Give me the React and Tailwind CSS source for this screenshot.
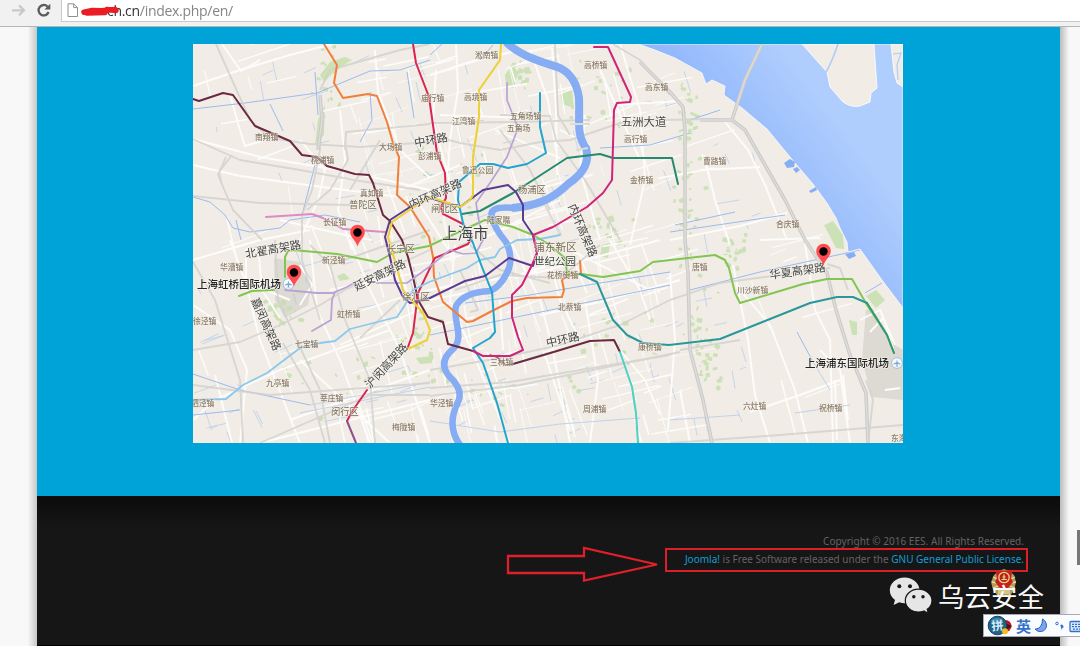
import React from "react";

function rng(seed) {
  let s = seed;
  return () => {
    s = (s * 1664525 + 1013904223) % 4294967296;
    return s / 4294967296;
  };
}

const SEA =
  "638,44 655,50 675,58 702,73 706,84 712,80 725,86 724,95 742,108 767,129 795,163 813,184 827,203 836,218 840,228 847,242 848,252 860,249 882,280 903,308 903,44";

function seaEdge(y) {
  const e = [[44, 630], [58, 670], [92, 725], [133, 767], [167, 798], [203, 827], [242, 847], [280, 882], [308, 903], [999, 903]];
  for (let i = 1; i < e.length; i++) {
    if (y < e[i][0]) {
      const t = (y - e[i - 1][0]) / (e[i][0] - e[i - 1][0]);
      return e[i - 1][1] + t * (e[i][1] - e[i - 1][1]);
    }
  }
  return 903;
}

const r = rng(77);
const streets = Array.from({ length: 260 }, () => {
  const cx = r() < 0.8 ? 350 + r() * 310 : 193 + r() * 710;
  const cy = 44 + r() * 399;
  const steep = r() < 0.5;
  const len = 14 + r() * 45;
  const a = (steep ? 1.3 : -0.28) + (r() - 0.5) * 0.25;
  return {
    d: `M${cx.toFixed(1)} ${cy.toFixed(1)}l${(Math.cos(a) * len).toFixed(1)} ${(Math.sin(a) * len).toFixed(1)}`,
    w: 0.6 + r() * 1.1,
  };
});
const canals = Array.from({ length: 130 }, () => {
  const cx = 193 + r() * 560;
  const cy = 60 + r() * 375;
  const a = (r() < 0.5 ? 1.25 : -0.3) + (r() - 0.5) * 0.3;
  const len = 5 + r() * 20;
  return `M${cx.toFixed(1)} ${cy.toFixed(1)}l${(Math.cos(a) * len).toFixed(1)} ${(Math.sin(a) * len).toFixed(1)}`;
});
const clusters = [
  [325, 75, 18, 45], [520, 75, 18, 22], [687, 120, 14, 40], [686, 160, 18, 70], [690, 235, 16, 60], [698, 330, 22, 50], [706, 365, 16, 30],
  [500, 380, 90, 30], [620, 335, 50, 40], [280, 310, 20, 16], [420, 330, 30, 45], [610, 225, 25, 25], [735, 250, 15, 25],
  [450, 190, 60, 60], [350, 370, 90, 50], [600, 90, 40, 40],
];
const parks = clusters.flatMap(([x, y, w, h]) =>
  Array.from({ length: 20 }, () => ({
    x: x + (r() + r() - 1) * w,
    y: y + (r() + r() - 1) * h,
    w: 1.5 + r() * 4.5,
    h: 1.5 + r() * 3.5,
    a: r() * 60 - 30,
  }))
).filter((p) => p.x < seaEdge(p.y) - 8 && p.y < 440);

const whiteRoads = [
  "193,86 240,70 290,55 332,44", "222,44 241,71 260,60", "193,139 260,157 350,172 430,190", "193,165 240,176 330,188 400,197",
  "230,95 240,130 245,146 265,140", "300,140 325,170 318,200 300,240", "340,110 345,160 338,210 352,250", "375,50 378,92 400,150 430,178",
  "456,44 458,90 450,140 448,170", "430,75 470,62 520,50", "440,115 500,117 540,117", "436,70 433,120 452,190", "552,48 556,110 557,175",
  "530,50 548,100 556,150", "620,44 640,110 645,180 630,245", "615,105 680,101", "600,70 640,160", "585,115 580,170 600,240", "560,130 590,145",
  "704,155 715,200 730,245", "725,122 748,150 765,185 787,240", "670,240 740,226 787,213", "760,240 820,238", "700,170 760,167",
  "193,260 260,240 310,230", "230,240 245,280 260,340 300,443", "193,420 215,400 280,370 390,330", "193,305 230,330 247,370 240,443",
  "215,375 232,443", "310,240 317,310 340,360 370,443", "350,240 370,290 400,350 430,443", "300,360 390,443", "260,443 370,415 430,400",
  "290,420 430,370", "330,290 430,270", "340,345 430,305", "455,245 450,300 480,370 510,443", "510,240 540,300 553,350 570,443",
  "585,300 598,380 590,443", "620,350 645,380 660,415", "545,355 560,400 570,430", "430,290 540,272 660,240", "430,300 480,290",
  "540,315 600,302 680,280", "610,240 640,290 650,320", "733,265 748,340 755,395 770,443", "740,290 770,325 795,390 808,443",
  "805,243 815,310 830,340 833,443", "750,412 800,395 840,380", "820,350 840,370 850,443", "670,273 675,340 668,430", "860,320 880,310 895,345",
  "870,332 883,318 893,348", "885,390 900,388", "835,380 837,440", "843,375 848,420", "680,390 690,443", "495,130 560,158",
  "480,240 560,200", "545,240 560,300 580,340", "500,300 503,350", "570,250 650,290", "420,205 455,260", "400,190 460,165",
  "245,250 275,248", "246,258 246,282 290,300", "300,265 312,285 300,305", "258,245 262,290 280,318", "280,220 345,235 372,240",
];
const greyRoads = [
  "216,44 232,80 250,120 270,138 310,144 360,147 430,142", "193,139 240,160 300,170 360,181 420,190", "193,196 260,203 350,205",
  "345,142 348,160 330,190 307,210", "322,110 320,150 312,190 302,215", "380,140 350,190", "226,157 218,175 233,210 262,240",
  "232,155 219,172 222,185", "320,90 330,70 400,50 430,44", "345,150 346,132 400,127 430,124",
  "430,135 460,143 500,150 540,142 570,140 620,123 660,120 715,119 732,120", "500,115 550,116 556,140 585,180 620,240",
  "555,44 558,115 570,135", "500,130 530,170 550,210", "430,123 520,122 590,120",
  "193,350 240,342 280,325 320,305 345,290 390,268 430,250", "193,262 215,300 240,380 243,443", "275,240 278,300 320,390 330,443",
  "283,343 310,390 325,443", "330,265 345,320 370,380 375,443", "302,215 302,260 320,320", "260,443 370,395 430,395",
  "430,370 500,358 560,345 620,325 670,300", "430,388 510,382 580,370 670,355", "430,396 520,385 680,352",
  "455,290 500,275 560,278 600,245", "670,300 720,283 780,275 830,268", "193,385 270,395 430,383", "680,350 740,340", "310,245 330,265 430,230",
  "670,443 780,435 903,425", "613,44 640,60 670,95", "360,338 400,300", "460,270 478,310 470,312", "470,245 500,270 550,283",
  "827,264 840,268 848,290", "866,380 873,400 868,443",
];
const bigRoads = [
  "762,44 745,80 732,120", "640,62 670,92 683,107 685,130 685,240 688,273 690,350 703,400 712,443",
  "700,120 732,120 745,130 765,165 785,200 805,240 827,273 836,310 850,355 866,393 868,443",
  "320,95 322,120 318,150",
];
const blues = [
  "193,109 245,103 317,93 370,71 400,70 430,60", "193,197 210,202 225,215 233,228 250,232 280,228 290,220 325,215 360,222",
  "315,72 318,115", "370,92 372,120 360,142", "407,72 414,118", "270,104 283,131", "302,215 315,165", "193,415 240,410",
  "193,374 240,390 310,405", "465,303 530,295 600,283 670,272", "430,335 560,308 670,285",
  "600,148 650,145 690,133", "690,120 720,110", "675,225 735,212", "670,232 785,215", "690,290 760,272 860,250",
  "797,332 812,360", "865,293 882,283", "493,45 480,60", "430,55 442,44", "236,220 241,240",
];
const faintBlues = ["300,413 430,387", "430,421 500,432 560,424 640,418", "670,420 740,415", "795,413 850,405", "812,360 830,390", "310,405 430,382"];

const L = [
  ["#6b2841", "193,99 199,101 223,93 233,95 255,126 290,141 302,155 317,157 327,166 355,174 369,175 373,183 383,215 390,221 402,240 408,257 413,277 418,300 428,317 443,322 448,344 473,351", 2],
  ["#8a4a58", "490,355 497,357 505,365 513,364", 1.4],
  ["#6b2841", "513,364 547,354 590,341 614,340 620,352", 2],
  ["#4fd0c4", "620,352 632,387 636,413 638,443", 2],
  ["#f07f3c", "324,44 337,65 334,83 343,98 368,94 377,96 387,122 393,143 399,157 397,195 410,207 429,237 433,257 434,277 443,302 467,322 473,321 490,312 512,301 527,298 562,297 564,290 562,280 567,276 581,274 580,261", 2],
  ["#d92550", "413,44 416,63 429,97 437,153 445,173 446,198 441,207 443,214 463,224 472,237 468,244 435,258 430,268 418,293 413,333 408,347", 2],
  ["#d92550", "367,390 353,410 347,421", 2],
  ["#8e4f8f", "347,421 356,443", 2],
  ["#8bc9ec", "193,400 226,399 243,385 267,373 300,348 320,343 335,341 350,329 397,317 405,305 413,290 429,282 467,268 480,260 495,257 500,249 517,240 540,239 560,235", 1.8],
  ["#82c552", "239,296 252,291 274,290", 2],
  ["#82c552", "285,277 285,257 288,251 293,250 337,254 377,262 393,253 429,246 463,230 485,220 513,227 533,235 547,243 565,258 567,273 581,274 603,277 640,271 653,262 715,255 725,260 729,268 735,293 740,303 803,284 827,279 852,279 867,305 887,335 894,353", 2],
  ["#b9a3d4", "507,83 507,100 518,128 507,157 490,183 476,203 480,227 483,240 476,253 463,254 450,250 429,267 407,283 377,283", 1.7],
  ["#b9a3d4", "285,290 317,293 333,293 347,287 360,280", 1.8],
  ["#b9a3d4", "335,292 332,300 331,320 312,331", 1.8],
  ["#db8cc4", "266,217 312,214 323,218 343,229 385,232", 1.9],
  ["#2a979c", "580,274 597,282 613,320 627,335 643,343 669,345 720,339 810,303 837,297 853,297 867,303", 2],
  ["#2f9a72", "867,303 887,335 894,353", 2],
  ["#268a70", "462,214 480,211 513,193 530,182 567,158 600,154 613,158 672,158 678,184", 2],
  ["#22a4cf", "540,93 540,127 546,153 527,164 508,168 493,164 480,164 459,182 458,200 463,223 473,243 482,267 492,292 495,332 490,338 473,348 483,363 497,403 508,443", 2],
  ["#5b3b90", "410,207 390,220 385,237 390,257 395,280 403,297 410,303 430,298 465,281 485,276 509,258 533,266 537,253 533,235 523,220 523,205 516,192 508,185 483,190 460,207 430,198 410,207", 2],
  ["#edd03a", "501,44 500,60 479,90 479,117 473,157 473,195 470,200 460,207 445,202 430,197 411,209 392,222 388,237 391,247 403,290 423,313 430,330 427,340 408,349", 2.1],
  ["#cf2479", "594,47 608,47 631,97 630,102 617,103 614,110 612,180 603,193 587,207 553,227 533,235 537,253 532,265 522,285 512,295 512,317 518,337 523,350 510,356 483,356 473,351", 2],
];

const towns = [
  ["淞南镇", 475, 58], ["高桥镇", 584, 68], ["高东镇", 645, 90], ["高境镇", 464, 100], ["庙行镇", 421, 101], ["江湾镇", 452, 124],
  ["五角场镇", 510, 119], ["五角场", 507, 131], ["高行镇", 624, 142], ["南翔镇", 255, 140], ["大场镇", 379, 150], ["彭浦镇", 418, 159],
  ["桃浦镇", 311, 163], ["鲁迅公园", 462, 173], ["曹路镇", 703, 164], ["金桥镇", 630, 183], ["真如镇", 360, 196], ["长征镇", 323, 225],
  ["陆家嘴", 487, 223], ["合庆镇", 776, 227], ["华漕镇", 220, 270], ["新泾镇", 322, 263], ["唐镇", 692, 270], ["川沙新镇", 737, 293],
  ["花桥街镇", 547, 278], ["北蔡镇", 558, 310], ["徐泾镇", 193, 324], ["虹桥镇", 337, 317], ["七宝镇", 295, 347], ["三林镇", 490, 365],
  ["康桥镇", 638, 350], ["九亭镇", 266, 386], ["莘庄镇", 320, 401], ["泗泾镇", 191, 406], ["华泾镇", 430, 406], ["周浦镇", 583, 412],
  ["六灶镇", 743, 409], ["祝桥镇", 819, 411], ["梅陇镇", 392, 430], ["东海", 891, 441],
];
const districts = [["普陀区", 349, 208], ["闸北区", 431, 212], ["杨浦区", 518, 193], ["长宁区", 387, 252], ["徐汇区", 402, 300], ["闵行区", 331, 415]];
const roadNames = [
  ["中环路", 415, 147, -10], ["内环高架路", 411, 209, -24], ["内环高架路", 568, 206, 67], ["北翟高架路", 246, 258, -10],
  ["延安高架路", 356, 291, -26], ["嘉闵高架路", 251, 300, 66], ["沪闵高架路", 370, 389, -47], ["中环路", 547, 347, -12],
  ["华夏高架路", 770, 279, -8],
];

function Pin({ x, y }) {
  return (
    <g transform={`translate(${x} ${y})`}>
      <path d="M0 0C-1.5-6-7.3-9-7.3-14.5a7.3 7.3 0 0 1 14.6 0C7.3-9 1.5-6 0 0Z" fill="#ff4a50" />
      <circle cx="0" cy="-14" r="4.2" fill="#000" />
    </g>
  );
}

function Airport({ x, y }) {
  return (
    <g transform={`translate(${x} ${y})`}>
      <circle r="5.4" fill="#f5f9fd" stroke="#a9bdd4" />
      <path d="M0-3.5L.7-.7 3.6.8v.8L.7 1l-.2 1.5 1 .9h-3l1-.9L-.7 1l-2.900.6V.8L-.7-.7Z" fill="#7fa5d4" />
    </g>
  );
}

function CityMap() {
  return (
    <svg viewBox="193 44 710 399" className="block h-[399px] w-[710px]" style={{ fontFamily: '"Noto Sans CJK SC", sans-serif' }}>
      <defs>
        <linearGradient id="sea" gradientUnits="userSpaceOnUse" x1="740" y1="165" x2="825" y2="100">
          <stop offset="0" stopColor="#90b6fc" />
          <stop offset="1" stopColor="#b0cefd" />
        </linearGradient>
      </defs>
      <rect x="193" y="44" width="710" height="399" fill="#f1ede6" />
      <g fill="#d9d5cf" opacity=".85">
        <polygon points="866,310 872,308 895,345 903,350 903,400 872,397 862,360" />
        <polygon points="274,258 300,262 312,280 308,305 285,318 275,300" />
      </g>
      <g fill="#c3deab" opacity=".8">
        {parks.map((p, i) => (
          <rect key={i} x={p.x} y={p.y} width={p.w} height={p.h} rx="1" transform={`rotate(${p.a} ${p.x} ${p.y})`} />
        ))}
        <polygon points="320,75 330,62 345,57 352,60 336,70 324,82" />
        <polygon points="505,75 512,64 518,72 514,88 506,86" />
        <polygon points="560,92 572,90 574,108 562,104" />
        <polygon points="824,225 833,221 843,235 844,249 836,248" />
        <polygon points="866,296 876,290 885,300 876,308" />
        <polygon points="602,245 610,243 608,258 600,256" />
        <polygon points="318,120 325,105 324,135 315,145" />
        <polygon points="849,320 857,322 857,335 852,335" />
        <polygon points="271,306 275,306 282,322 276,320" />
        <polygon points="416,358 433,356 432,363 420,364" />
        <polygon points="337,276 344,273 350,279 340,281" />
      </g>
      <g stroke="#a4c0ee" strokeWidth=".8" opacity=".7" fill="none">
        {canals.map((d, i) => <path key={i} d={d} />)}
      </g>
      <g fill="none" stroke="#fdfcfa">
        {streets.map((s, i) => <path key={i} d={s.d} strokeWidth={s.w} />)}
        {whiteRoads.map((p, i) => <polyline key={i} points={p} strokeWidth="1.9" />)}
      </g>
      <g fill="none" stroke="#9bbaee" strokeWidth="1" strokeLinejoin="round">
        {blues.map((p, i) => <polyline key={i} points={p} />)}
      </g>
      <g fill="none" stroke="#bccdec" strokeWidth=".9">
        {faintBlues.map((p, i) => <polyline key={i} points={p} />)}
      </g>
      <polygon points={SEA} fill="url(#sea)" stroke="#fbfaf8" strokeWidth=".8" />
      <g fill="#f1ede6" stroke="#fff" strokeWidth=".8">
        <path d="M802 44L827 72L830 87L843 102Q852 108 860 106L870 102L871 93L877 88L874 44Z" />
        <path d="M891 44L894 72L897 83L903 87V44Z" />
      </g>
      <path d="M838 44Q832 62 826 72" fill="none" stroke="#b1cbf8" strokeWidth="1.6" />
      <path d="M893 54L901 53L897 65L898 80" fill="none" stroke="#b1cbf8" strokeWidth="1.2" />
      <g fill="#86aef4">
        <path d="M784 163l6-4 5 3-1 5-7 1zM793 169l4-2 3 3-4 3zM809 191l7-4 1 3-6 3zM845 254l9-2 2 4-7 3z" />
      </g>
      <g fill="none" stroke="#d2d0cd" strokeWidth="1.9" opacity=".8" strokeLinejoin="round">
        {greyRoads.map((p, i) => <polyline key={i} points={p} />)}
      </g>
      <g fill="none" strokeLinejoin="round">
        {bigRoads.map((p, i) => <polyline key={i} points={p} stroke="#cccbc9" strokeWidth="3.6" />)}
        {bigRoads.map((p, i) => <polyline key={"c" + i} points={p} stroke="#dedddb" strokeWidth="1.4" />)}
      </g>
      <path
        d="M506 42C520 56 540 61 560 68Q576 76 579 98C580 120 576 135 586 148Q592 168 568 184C552 200 535 206 512 208"
        fill="none" stroke="#86adf3" strokeWidth="8" strokeLinejoin="round"
      />
      <path
        d="M516 208Q488 205 492 217Q494 228 506 242Q513 256 509 268Q502 286 490 291Q464 292 456 306C452 320 466 338 452 350Q438 362 449 376Q464 390 458 402Q446 426 460 445"
        fill="none" stroke="#86adf3" strokeWidth="6.500" strokeLinejoin="round"
      />
      <g fill="none" stroke="#dcdbd8" strokeWidth="2">
        <path d="M570 124L590 124M545 205L560 235M576 150L588 148" />
      </g>
      <g fill="none" strokeLinejoin="round" strokeLinecap="round">
        {L.map(([c, p, w], i) => <polyline key={i} points={p} stroke={c} strokeWidth={w} />)}
      </g>
      <g fontSize="7.8" fontWeight="500" fill="#8a7c69" stroke="#f5f1ea" strokeWidth="1.2" strokeOpacity=".55" paintOrder="stroke">
        {towns.map(([t, x, y]) => <text key={t} x={x} y={y}>{t}</text>)}
      </g>
      <g fontSize="9.3" fill="#786a57" stroke="#f5f1ea" strokeWidth="1.3" strokeOpacity=".6" paintOrder="stroke">
        {districts.map(([t, x, y]) => <text key={t} x={x} y={y}>{t}</text>)}
        <text x="534" y="251" fontSize="10.7">浦东新区</text>
      </g>
      <g fontSize="11.3" fill="#454545" stroke="#f7f4ee" strokeWidth="1.4" strokeOpacity=".75" paintOrder="stroke">
        {roadNames.map(([t, x, y, a], i) => <text key={i} transform={`translate(${x} ${y}) rotate(${a})`}>{t}</text>)}
        <text x="621" y="126">五洲大道</text>
        <text x="534" y="265" fontSize="10.5" fill="#35413a">世纪公园</text>
        <text x="442" y="239" fontSize="15.5" fill="#444">上海市</text>
        <text x="197" y="288" fontSize="10.500" fontWeight="500" fill="#222">上海虹桥国际机场</text>
        <text x="805" y="367" fontSize="10.500" fontWeight="500" fill="#222">上海浦东国际机场</text>
      </g>
      <Airport x={288.5} y={284} />
      <Airport x={897} y={363} />
      <Pin x={357.5} y={246.5} />
      <Pin x={294} y={286.5} />
      <Pin x={823.5} y={265.5} />
    </svg>
  );
}

function BrowserBar() {
  return (
    <div className="flex h-[27px] shrink-0 border-b border-[#b5b5b5] bg-[#f1f1f1]">
      <svg className="h-[26px] w-[61px]" viewBox="0 0 61 26" fill="none">
        <path d="M12 10.300H24M19 5.300L24 10.300L19 15.300" stroke="#c9c9c9" strokeWidth="2.200" />
        <path d="M47.600 6.700A5.200 5.200 0 1 0 48.600 12" stroke="#5b5b5b" strokeWidth="2.300" />
        <path d="M50.300 3.700V9.500H44.400Z" fill="#5b5b5b" />
      </svg>
      <div className="relative flex h-[22px] flex-1 border-b border-l border-[#c9c9c9] bg-white">
        <svg className="ml-[5px] mt-[3px] h-[16px] w-[12px]" viewBox="0 0 12 16" fill="#fff" stroke="#909090" strokeWidth="1">
          <path d="M1 .8H6.700L10.500 4.600V13.500H1ZM6.700 .8V4.600H10.500" />
        </svg>
        <div className="ml-[28px] mt-[1px] whitespace-nowrap font-['Open_Sans',sans-serif] text-[14px] leading-[19px] tracking-[-0.290px] text-[#858585]">
          <span className="text-[#333]">ch.cn</span>/index.php/en/
        </div>
        <svg className="absolute left-[18px] top-[4px] h-[14px] w-[44px]" viewBox="0 0 44 14">
          <path d="M4 8.200L12 6.500L22 6.700L35 5.400M7 9L25 8.400M27 5.500L36 6.500" fill="none" stroke="#ec1c24" strokeWidth="5.500" strokeLinecap="round" />
        </svg>
      </div>
    </div>
  );
}

function Watermark() {
  return (
    <div className="absolute left-[889px] top-[568px] flex h-[50px] w-[160px]">
      <svg className="absolute left-[101px] top-0 h-[30px] w-[28px]" viewBox="0 0 28 30">
        <path d="M14 1L19 3L24 7L26 14L24 22L20 28H8L3 22L1 14L4 7L9 3Z" fill="#b39c55" />
        <path d="M3 9l4 2M2 14l5 1M3 20l5-2M25 9l-4 2M26 14l-5 1M25 20l-5-2M8 27l2-5M20 27l-2-5" stroke="#e9dda8" strokeWidth="1.300" />
        <path d="M6 4L11 2.500H18L22 4L21 10L23 14L18 20H10L5 14L7 10Z" fill="#c81f1c" />
        <circle cx="14" cy="9.500" r="5.200" fill="#b9231a" stroke="#edd38b" strokeWidth="1.300" />
        <path d="M11.500 11.500H17M12.500 9H15.500M14 6.500V11" stroke="#f0d88d" strokeWidth="1.200" />
        <path d="M8 22H20V26H8Z" fill="#d4c488" />
      </svg>
      <svg className="mt-[9px] h-[38px] w-[44px]" viewBox="0 0 44 38">
        <path d="M15.500.500C7.200.500.800 6.300.800 13.200C.800 17.200 2.800 20.600 6 23L4.600 28L10.200 25.200Q15 26.900 20 25.700C26.500 24.200 30.500 19.200 30.500 13.200C30.500 6.300 23.800.500 15.500.500Z" fill="#e6e6e6" />
        <path d="M29.500 12.200C22.300 12.200 16.300 17.100 16.300 23.500S22.300 35 29.500 35Q32.200 35 34.900 34L39.400 36.500L38.200 32.300C41.300 30.200 43 27 43 23.500C43 17.100 36.700 12.200 29.500 12.200Z" fill="#e6e6e6" stroke="#161616" strokeWidth="1.200" />
        <g fill="#161616"><circle cx="10.300" cy="9.300" r="2" /><circle cx="21" cy="9.300" r="2" /><circle cx="24.800" cy="19.700" r="1.700" /><circle cx="34" cy="19.700" r="1.700" /></g>
      </svg>
      <span className="relative ml-[5px] mt-[8px] whitespace-nowrap font-['Noto_Sans_CJK_SC',sans-serif] text-[26.500px] leading-[40px] text-[#fafafa]">乌云安全</span>
    </div>
  );
}

function ImeBar() {
  return (
    <div className="absolute left-[983px] top-[614px] flex h-[23px] w-[97px] items-center overflow-hidden border border-r-0 border-[#a9a9b2] bg-[#fbfcff]">
      <svg className="ml-[3px] h-[21px] w-[25px] shrink-0" viewBox="0 0 25 21">
        <circle cx="18.500" cy="11" r="6" fill="#c61524" />
        <path d="M18 8L25 11L18 16Z" fill="#49151a" />
        <circle cx="10.500" cy="10.500" r="9.300" fill="#246389" stroke="#174261" />
        <ellipse cx="10" cy="6" rx="6" ry="3" fill="#57a1bf" opacity=".6" />
        <text x="4.500" y="15" fontSize="12" fontWeight="bold" fill="#d5eefa" fontFamily="Noto Sans CJK SC, sans-serif" transform="rotate(-7 10.500 10.500)">拼</text>
        <circle cx="18" cy="16.300" r="3" fill="#f4bd24" />
      </svg>
      <span className="ml-[4px] shrink-0 font-['Noto_Sans_CJK_SC',sans-serif] text-[15px] font-bold leading-[20px] text-[#3272cb]">英</span>
      <svg className="ml-[3px] h-[20px] w-[46px] shrink-0" viewBox="0 0 46 20">
        <path d="M8.500 3C14 6 14 14 7.500 15.500Q4 16.300 1 13.200Q8.500 12.700 8.500 3Z" fill="#78a5ed" stroke="#2e63b8" />
        <circle cx="23" cy="7.500" r="1.300" fill="none" stroke="#3973c5" />
        <path d="M26.300 9.500a1.700 1.700 0 1 1 2 2.600l-2 3q1.500-2 .500-4.600Z" fill="#3472c9" />
        <rect x="36" y="5.500" width="16" height="10" rx="1" fill="#d9e8ff" stroke="#356fc5" strokeWidth="1.300" />
        <path d="M38 8.300h10M38 10.700h10M39 13.200h9" stroke="#356fc5" strokeWidth="1.300" strokeDasharray="2 1" />
      </svg>
    </div>
  );
}

export default function App() {
  return (
    <div className="relative flex h-[646px] w-[1080px] flex-col overflow-hidden bg-[#f8f8f8]">
      <BrowserBar />
      <div className="flex flex-1">
        <div className="w-[37px] bg-linear-to-r from-[#f8f8f8] from-75% to-[#c8c8c8]" />
        <main className="flex w-[1023px] flex-col">
          <section className="flex h-[469px] justify-start bg-[#00a3d7] pl-[156px] pt-[17px]">
            <CityMap />
          </section>
          <footer className="flex flex-1 flex-col items-end border-b border-black bg-linear-to-b from-[#0b0b0b] to-[#161616] to-[32px] pr-[36px] pt-[36px] font-['Noto_Sans',sans-serif] text-[10px] leading-[18px] text-[#636363]">
            <p className="whitespace-nowrap tracking-[0.040px]">Copyright © 2016 EES. All Rights Reserved.</p>
            <p className="whitespace-nowrap">
              <a className="text-[#109fd6]">Joomla!</a> is Free Software released under the <a className="text-[#109fd6]">GNU General Public License.</a>
            </p>
          </footer>
        </main>
        <div className="flex w-[20px] justify-end bg-linear-to-r from-[#bcbcbc] to-[#f8f8f8] to-45% pt-[503px]">
          <div className="h-[35px] w-[3px] bg-[#777]" />
        </div>
      </div>
      <svg className="absolute left-[500px] top-[540px] h-[50px] w-[166px]" viewBox="500 540 166 50" fill="none" stroke="#df202a" strokeWidth="2.300">
        <path d="M508 556H584V548L657 564.500L584 580.500V573H508Z" />
      </svg>
      <div className="absolute left-[665px] top-[548px] h-[24px] w-[363px] border-[2.500px] border-[#dc1e28]" />
      <Watermark />
      <ImeBar />
    </div>
  );
}
